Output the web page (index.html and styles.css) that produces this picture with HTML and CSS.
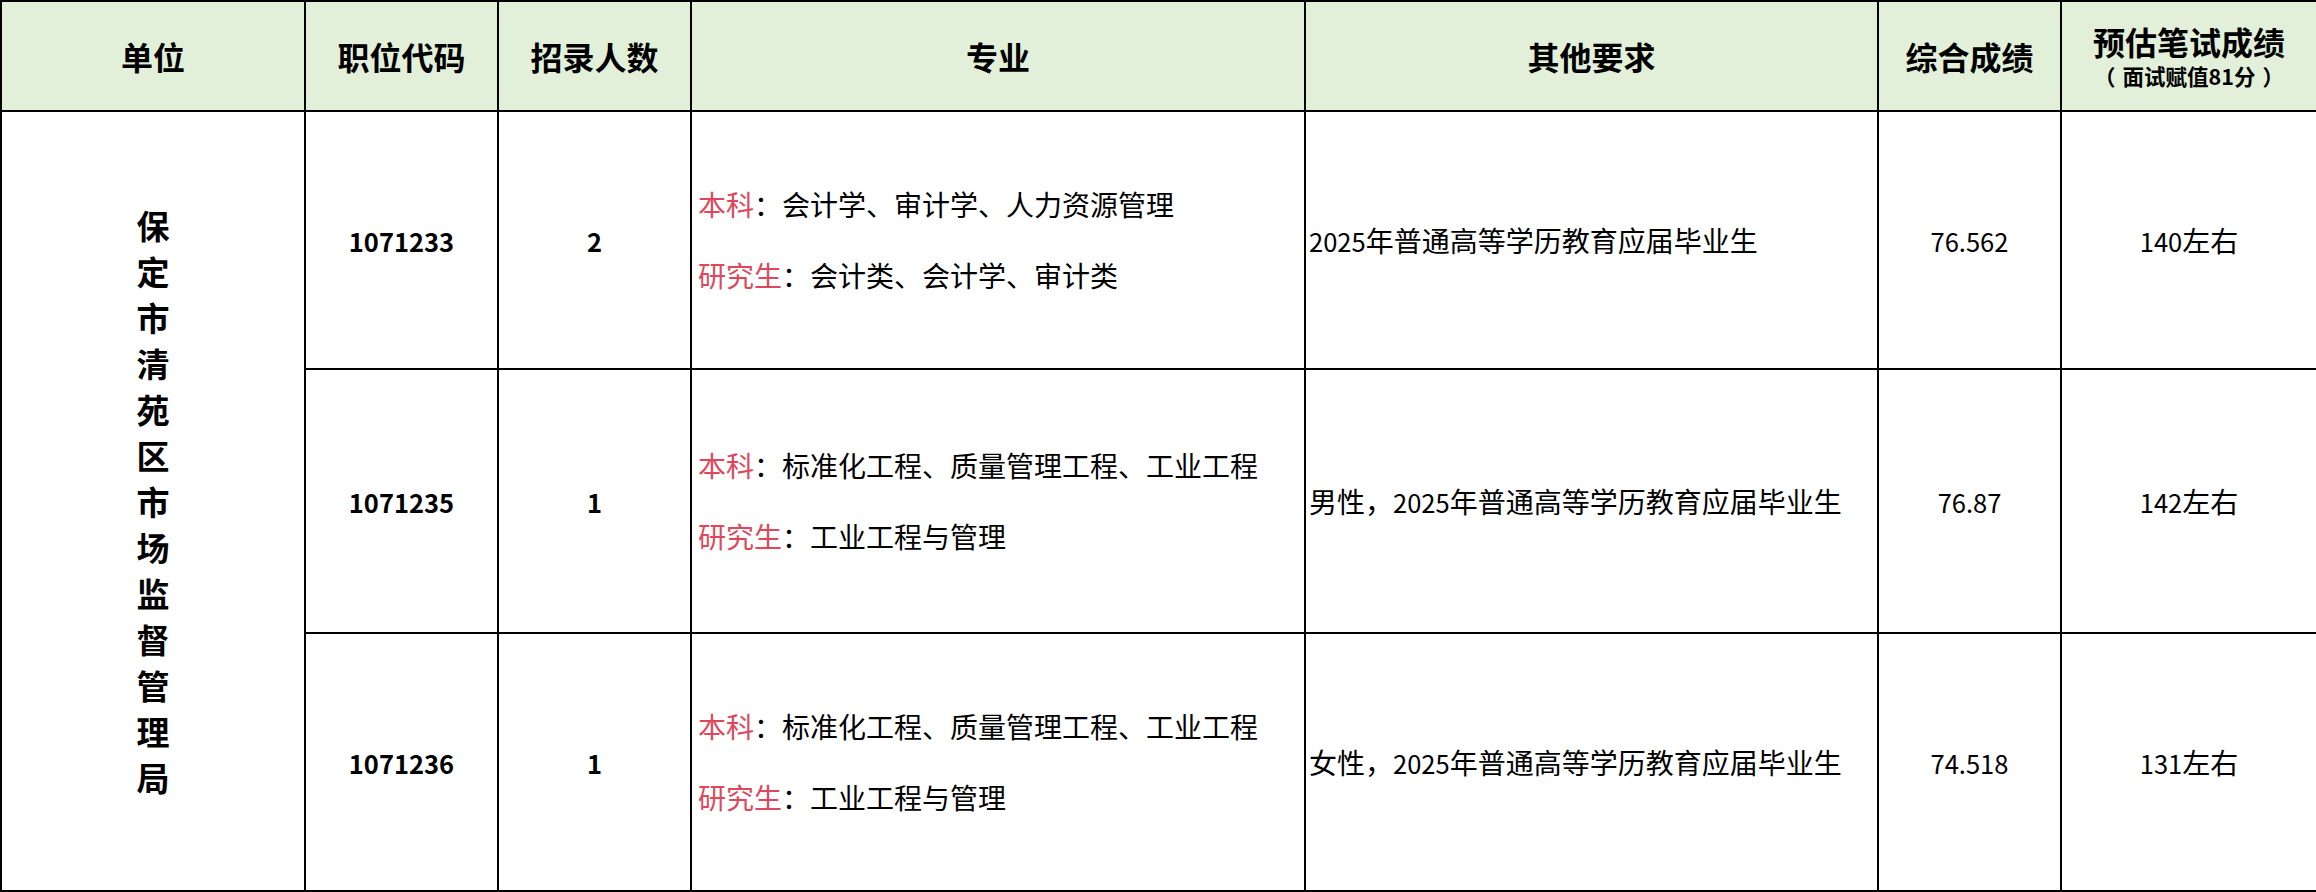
FILE: index.html
```html
<!DOCTYPE html>
<html lang="zh-CN">
<head>
<meta charset="utf-8">
<title>职位表</title>
<link rel="stylesheet" href="styles.css">
</head>
<body>
<table class="grid">
  <colgroup>
    <col class="c-unit">
    <col class="c-code">
    <col class="c-num">
    <col class="c-major">
    <col class="c-other">
    <col class="c-score">
    <col class="c-est">
  </colgroup>
  <thead>
    <tr class="head-row">
      <th>单位</th>
      <th>职位代码</th>
      <th>招录人数</th>
      <th>专业</th>
      <th>其他要求</th>
      <th>综合成绩</th>
      <th class="est-head"><div class="est-main">预估笔试成绩</div><div class="est-sub"><span class="paren-l">（</span>面试赋值81分<span class="paren-r">）</span></div></th>
    </tr>
  </thead>
  <tbody>
    <tr class="row-a">
      <td class="unit" rowspan="3"><div class="vtext">保定市清苑区市场监督管理局</div></td>
      <td class="center code"><span class="num">1071233</span></td>
      <td class="center code"><span class="num">2</span></td>
      <td class="major">
        <p class="line"><span class="tag">本科</span>：会计学、审计学、人力资源管理</p>
        <p class="line"><span class="tag">研究生</span>：会计类、会计学、审计类</p>
      </td>
      <td class="other"><span class="num">2025</span>年普通高等学历教育应届毕业生</td>
      <td class="center"><span class="num">76.562</span></td>
      <td class="center"><span class="num">140</span>左右</td>
    </tr>
    <tr class="row-b">
      <td class="center code"><span class="num">1071235</span></td>
      <td class="center code"><span class="num">1</span></td>
      <td class="major">
        <p class="line"><span class="tag">本科</span>：标准化工程、质量管理工程、工业工程</p>
        <p class="line"><span class="tag">研究生</span>：工业工程与管理</p>
      </td>
      <td class="other">男性，<span class="num">2025</span>年普通高等学历教育应届毕业生</td>
      <td class="center"><span class="num">76.87</span></td>
      <td class="center"><span class="num">142</span>左右</td>
    </tr>
    <tr class="row-c">
      <td class="center code"><span class="num">1071236</span></td>
      <td class="center code"><span class="num">1</span></td>
      <td class="major">
        <p class="line"><span class="tag">本科</span>：标准化工程、质量管理工程、工业工程</p>
        <p class="line"><span class="tag">研究生</span>：工业工程与管理</p>
      </td>
      <td class="other">女性，<span class="num">2025</span>年普通高等学历教育应届毕业生</td>
      <td class="center"><span class="num">74.518</span></td>
      <td class="center"><span class="num">131</span>左右</td>
    </tr>
  </tbody>
</table>
</body>
</html>
```

FILE: styles.css
```css
html, body {
  margin: 0;
  padding: 0;
  background: #ffffff;
}

body {
  font-family: "Noto Sans CJK SC", "Liberation Sans", sans-serif;
  color: #000000;
}

.grid {
  border-collapse: collapse;
  table-layout: fixed;
  width: 2316px;
}

.c-unit { width: 304px; }
.c-code { width: 193px; }
.c-num { width: 193px; }
.c-major { width: 614px; }
.c-other { width: 573px; }
.c-score { width: 183px; }
.c-est { width: 256px; }

.grid th,
.grid td {
  border: 2px solid #000000;
  padding: 0;
  vertical-align: middle;
}

.head-row {
  height: 110px;
}

.head-row th {
  background: #e2f0d9;
  font-size: 32px;
  font-weight: 700;
  text-align: center;
  line-height: 1.2;
}

.est-main {
  font-size: 32px;
  line-height: 38px;
}

.est-sub {
  font-size: 21.5px;
  line-height: 31px;
  font-weight: 700;
}

.paren-l {
  margin-right: 7px;
}

.paren-r {
  margin-left: 7px;
}

.row-a { height: 258px; }
.row-b { height: 264px; }
.row-c { height: 258px; }

.grid td {
  font-size: 28px;
  font-weight: 400;
}

.num {
  font-size: 25.5px;
}

.center {
  text-align: center;
}

.grid td.code {
  font-weight: 700;
}

.unit {
  text-align: center;
}

.vtext {
  width: 34px;
  margin: 0 auto;
  font-size: 33px;
  font-weight: 700;
  line-height: 46px;
  word-break: break-all;
}

.grid td.major {
  padding-left: 6px;
}

.line {
  margin: 0;
  line-height: 71px;
  white-space: nowrap;
}

.tag {
  color: #e0475a;
}

.grid td.other {
  padding-left: 3px;
  white-space: nowrap;
}
```
